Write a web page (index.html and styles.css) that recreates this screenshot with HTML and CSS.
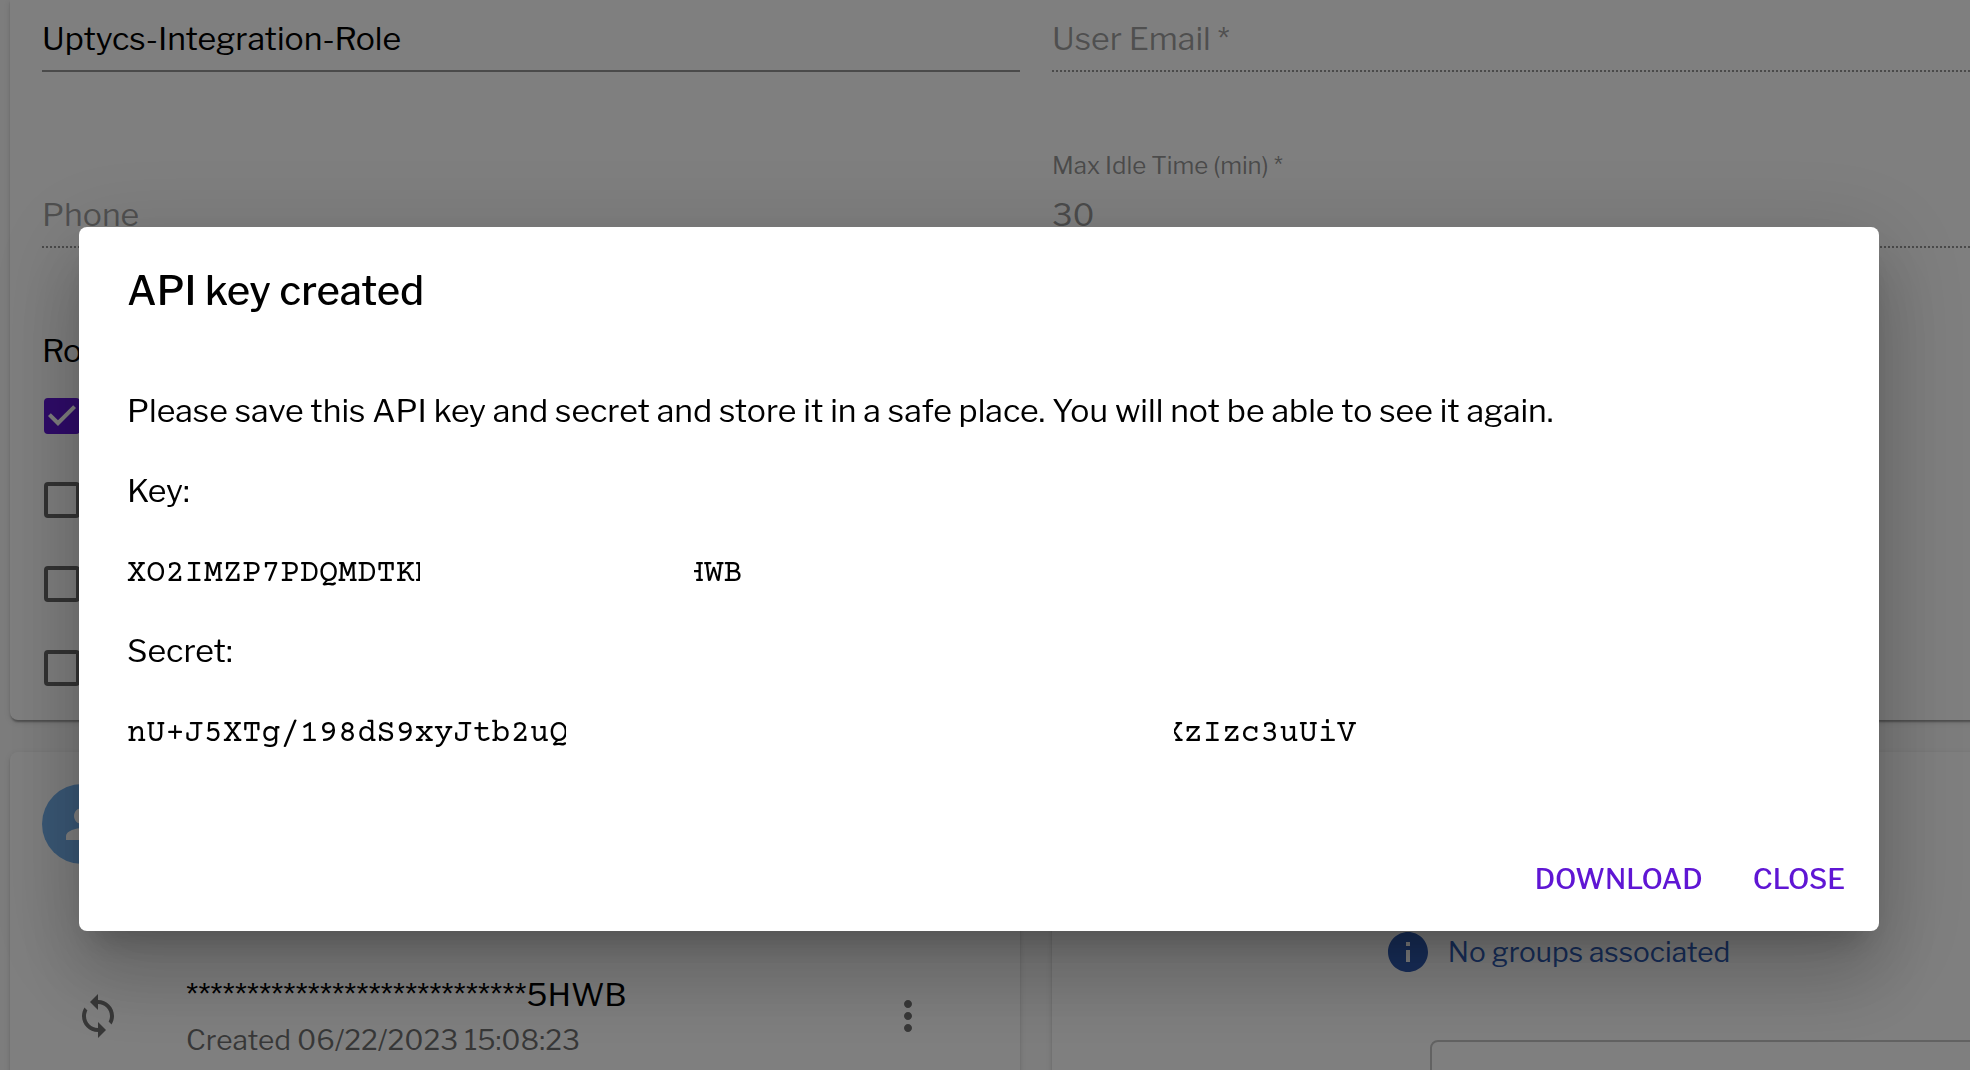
FILE: index.html
```html
<!DOCTYPE html>
<html lang="en">
<head>
<meta charset="utf-8">
<meta name="viewport" content="width=device-width, initial-scale=1">
<title>User - API key created</title>
<link rel="stylesheet" href="styles.css">
</head>
<body>
<main class="page">
  <section class="card card-profile">
    <div class="fields">
      <div class="field">
        <input class="field-input" type="text" aria-label="Name" value="Uptycs-Integration-Role">
      </div>
      <div class="field">
        <input class="field-input" type="email" aria-label="User Email" placeholder="User Email *" disabled>
      </div>
      <div class="field">
        <input class="field-input" type="tel" aria-label="Phone" placeholder="Phone" disabled>
      </div>
      <div class="field">
        <label class="field-label" for="idle">Max Idle Time (min) *</label>
        <input class="field-input" id="idle" type="text" value="30" disabled>
      </div>
    </div>
    <fieldset class="roles">
      <legend class="roles-title">Roles</legend>
      <input class="check" type="checkbox" aria-label="Role 1" checked>
      <input class="check" type="checkbox" aria-label="Role 2">
      <input class="check" type="checkbox" aria-label="Role 3">
      <input class="check" type="checkbox" aria-label="Role 4">
    </fieldset>
  </section>

  <div class="columns">
    <section class="card card-keys">
      <div class="avatar">
        <svg class="icon" viewBox="0 0 24 24" aria-hidden="true"><path d="M12 12c2.21 0 4-1.79 4-4s-1.79-4-4-4-4 1.790-4 4 1.790 4 4 4zm0 2c-2.670 0-8 1.340-8 4v2h16v-2c0-2.660-5.330-4-8-4z"/></svg>
      </div>
      <div class="key-row">
        <svg class="icon" viewBox="0 0 24 24" aria-hidden="true"><path d="M12 4V1L8 5l4 4V6c3.310 0 6 2.690 6 6 0 1.010-.25 1.970-.7 2.800l1.460 1.460C19.540 15.030 20 13.570 20 12c0-4.420-3.580-8-8-8zm0 14c-3.310 0-6-2.690-6-6 0-1.010.25-1.970.7-2.800L5.240 7.740C4.460 8.970 4 10.430 4 12c0 4.420 3.580 8 8 8v3l4-4-4-4v3z"/></svg>
        <div class="key-text">
          <div class="key-name">****************************5HWB</div>
          <div class="key-date">Created 06/22/2023 15:08:23</div>
        </div>
        <button class="more" type="button" aria-label="More actions">
          <svg class="icon" viewBox="0 0 24 24" aria-hidden="true"><path d="M12 8c1.100 0 2-.9 2-2s-.9-2-2-2-2 .9-2 2 .9 2 2 2zm0 2c-1.100 0-2 .9-2 2s.9 2 2 2 2-.9 2-2-.9-2-2-2zm0 6c-1.100 0-2 .9-2 2s.9 2 2 2 2-.9 2-2-.9-2-2-2z"/></svg>
        </button>
      </div>
    </section>
    <section class="card card-groups">
      <div class="notice">
        <svg class="icon" viewBox="0 0 24 24" aria-hidden="true"><path d="M12 2C6.480 2 2 6.480 2 12s4.480 10 10 10 10-4.480 10-10S17.520 2 12 2zm1 15h-2v-6h2v6zm0-8h-2V7h2v2z"/></svg>
        <span>No groups associated</span>
      </div>
      <input class="group-input" type="text" aria-label="Group">
    </section>
  </div>
</main>

<div class="backdrop">
  <div class="dialog" role="dialog" aria-modal="true" aria-labelledby="dialog-title">
    <h2 class="dialog-title" id="dialog-title">API key created</h2>
    <div class="dialog-body">
      <p>Please save this API key and secret and store it in a safe place. You will not be able to see it again.</p>
      <p>Key:</p>
      <p><code>XO2IMZP7PDQMDTKH<span class="redacted redacted-key"></span>HWB</code></p>
      <p>Secret:</p>
      <p><code>nU+J5XTg/198dS9xyJtb2uQ<span class="redacted redacted-secret"></span>XzIzc3uUiV</code></p>
    </div>
    <div class="dialog-actions">
      <button class="action" type="button">DOWNLOAD</button>
      <button class="action" type="button">CLOSE</button>
    </div>
  </div>
</div>
</body>
</html>
```
FILE: styles.css
```css
* {
  box-sizing: border-box;
}

body {
  margin: 0;
  height: 100vh;
  overflow: hidden;
  background: #fafafa;
  color: #000;
  font: 32px/48px "Libre Franklin", "Open Sans", sans-serif;
}

input,
button {
  font: inherit;
  color: inherit;
}

/* The form is wider than the window and runs off its right side. */
.page {
  width: calc(100% + 92px);
  padding-left: 10px;
  display: flex;
  flex-direction: column;
  gap: 32px;
}

.card {
  background: #fff;
  border-radius: 8px;
  box-shadow:
    0 4px 2px -2px rgba(0, 0, 0, 0.2),
    0 2px 2px 0 rgba(0, 0, 0, 0.14),
    0 2px 6px 0 rgba(0, 0, 0, 0.12);
}

.card-profile {
  padding: 8px 32px 10px;
  border-radius: 0 0 8px 8px;
}

.fields {
  display: grid;
  grid-template-columns: 1fr 1fr;
  gap: 76px 32px;
  align-items: end;
}

.field {
  display: flex;
  flex-direction: column;
}

.field-label {
  font-size: 24px;
  line-height: 36px;
  color: rgba(0, 0, 0, 0.42);
}

.field-input {
  width: 100%;
  height: 64px;
  padding: 12px 0 14px;
  border: 0;
  border-bottom: 2px solid rgba(0, 0, 0, 0.42);
  background: none;
  line-height: 36px;
}

.field-input:disabled {
  border-bottom-style: dotted;
  color: rgba(0, 0, 0, 0.42);
}

.field-input::placeholder {
  color: rgba(0, 0, 0, 0.38);
  opacity: 1;
}

.roles {
  margin: 82px 0 0;
  padding: 0;
  border: 0;
  display: flex;
  flex-direction: column;
}

.roles-title {
  padding: 0;
  margin-bottom: 2px;
  line-height: 42px;
}

.check {
  appearance: none;
  width: 36px;
  height: 36px;
  margin: 24px 2px;
  border: 4px solid rgba(0, 0, 0, 0.6);
  border-radius: 4px;
}

.check:checked {
  border-color: #5f16d4;
  background: #5f16d4 url("data:image/svg+xml,%3Csvg xmlns='http://www.w3.org/2000/svg' viewBox='3 3 18 18'%3E%3Cpath fill='white' d='M10 17l-5-5 1.410-1.410L10 14.170l7.590-7.590L19 8z'/%3E%3C/svg%3E") border-box center / 36px;
}

.columns {
  display: grid;
  grid-template-columns: 1fr 1fr;
  gap: 32px;
}

.icon {
  display: block;
  flex: none;
  width: 48px;
  height: 48px;
  fill: currentColor;
}

.card-keys,
.card-groups {
  padding: 32px;
}

.avatar {
  width: 80px;
  height: 80px;
  display: grid;
  place-items: center;
  border-radius: 50%;
  background: #74b0ec;
  color: #fff;
}

.key-row {
  min-height: 104px;
  margin-top: 100px;
  padding: 0 56px 0 32px;
  display: flex;
  align-items: center;
  gap: 64px;
  color: rgba(0, 0, 0, 0.56);
}

.key-text {
  flex: 1;
}

.key-name {
  color: #000;
}

.key-date {
  font-size: 28px;
  line-height: 42px;
}

.more {
  padding: 0;
  border: 0;
  background: none;
}

.card-groups {
  display: flex;
  flex-direction: column;
}

.notice {
  margin-top: 144px;
  display: flex;
  justify-content: center;
  align-items: center;
  gap: 16px;
  font-size: 28px;
  color: #2f5cb4;
}

.group-input {
  align-self: flex-end;
  width: 600px;
  height: 112px;
  margin-top: 64px;
  padding: 0 28px;
  border: 2px solid rgba(0, 0, 0, 0.23);
  border-radius: 8px;
  background: none;
}

.backdrop {
  position: fixed;
  inset: 0;
  padding: 227px 91px 0 79px;
  background: rgba(0, 0, 0, 0.5);
}

.dialog {
  background: #fff;
  border-radius: 8px;
  box-shadow:
    0 22px 30px -14px rgba(0, 0, 0, 0.2),
    0 48px 76px 6px rgba(0, 0, 0, 0.14),
    0 18px 92px 16px rgba(0, 0, 0, 0.12);
}

.dialog-title {
  margin: 0;
  padding: 32px 48px;
  font-size: 40px;
  font-weight: 500;
  line-height: 64px;
}

.dialog-body {
  padding: 32px 48px 72px;
  display: flex;
  flex-direction: column;
  gap: 32px;
}

.dialog-body p {
  margin: 0;
}

.dialog-body code {
  display: block;
  padding-top: 6px;
  font-family: "Courier Prime", "Liberation Mono", monospace;
  font-size: 32px;
  line-height: 42px;
}

/* Covers the hidden characters and part of the ones on each side. */
.redacted {
  display: inline-block;
  position: relative;
  height: 40px;
  vertical-align: middle;
  background: #fff;
}

.redacted-key {
  width: 274px;
  margin: 0 -9px 0 -14px;
}

.redacted-secret {
  width: 608px;
  margin: 0 -10px 0 -2px;
}

.dialog-actions {
  padding: 16px;
  display: flex;
  justify-content: flex-end;
  gap: 14px;
}

.action {
  padding: 12px 18px;
  border: 0;
  border-radius: 8px;
  background: none;
  color: #5f16d4;
  font-size: 28px;
  font-weight: 500;
}
```
